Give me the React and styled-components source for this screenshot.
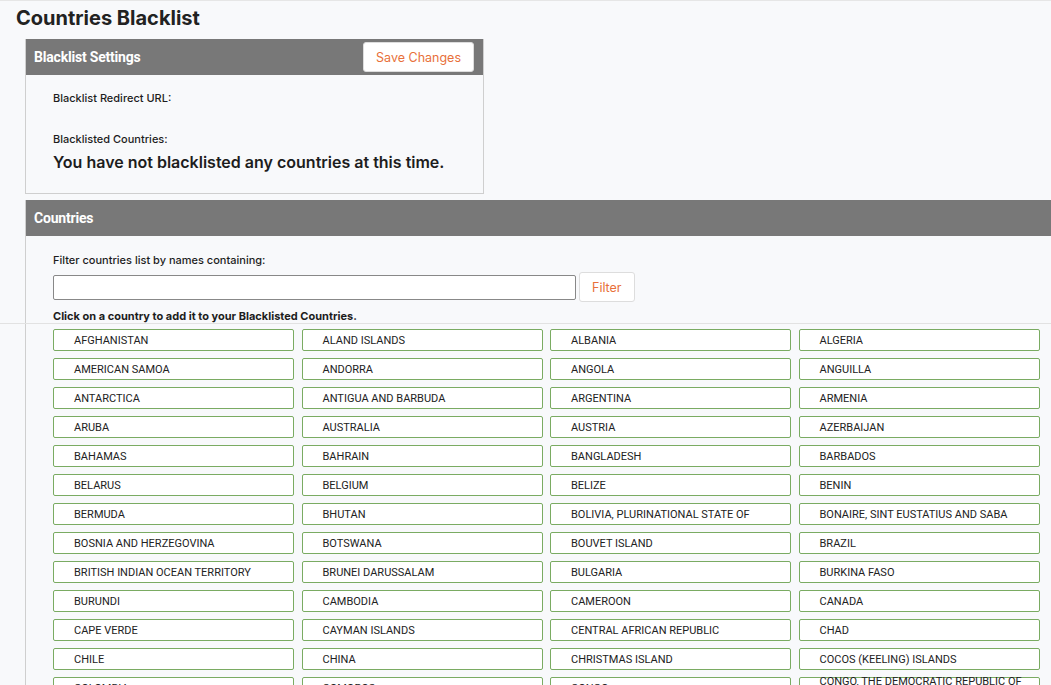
import React from "react";
import styled, { createGlobalStyle } from "styled-components";

const G = createGlobalStyle`
  html,body{margin:0;padding:0;background:#f8f9fb;font-family:Inter,Roboto,"Noto Sans",sans-serif;color:#1d1d1d;}
`;
const Page = styled.div`
  position:relative;padding:4px 0 0 16px;border-top:1px solid #e6e6e6;height:680px;overflow:hidden;
`;
const Title = styled.h1`margin:0 0 8px 0;font-size:20px;font-weight:700;line-height:26px;color:#222;`;
const Panel = styled.div`
  margin-left:9px;width:${p=>p.$w};border:1px solid #cfcfcf;border-top:none;background:#f8f9fb;margin-bottom:6px;
`;
const Head = styled.div`
  background:#787878;height:36px;display:flex;align-items:center;justify-content:space-between;padding:0 9px 0 8px;
  color:#fff;font-family:Roboto,sans-serif;font-weight:700;font-size:14px;letter-spacing:-0.2px;
`;
const Btn = styled.button`
  background:#fff;border:1px solid #ddd;border-radius:3px;color:#e8703a;font-family:Inter,Roboto,sans-serif;
  font-size:12.5px;height:30px;padding:0 12px;
`;
const Body = styled.div`padding:${p=>p.$p};`;
const Label = styled.div`font-size:11px;font-weight:${p=>p.$bold?700:500};margin-bottom:${p=>p.$mb||"0"};margin-top:${p=>p.$mt||"0"};`;
const Big = styled.div`font-size:16px;font-weight:600;margin-top:6px;`;
const FilterRow = styled.div`display:flex;gap:3px;align-items:center;margin-top:5px;`;
const Input = styled.input`width:523px;height:25px;box-sizing:border-box;border:1px solid #888;border-radius:2px;background:#fff;`;
const Grid = styled.div`display:grid;grid-template-columns:repeat(4,241px);column-gap:7.5px;row-gap:7px;margin-top:6px;`;
const Country = styled.div`
  height:22px;box-sizing:border-box;border:1px solid #7aab62;border-radius:2px;background:#fff;
  font-family:Roboto,sans-serif;font-size:11px;display:flex;align-items:center;padding-left:20px;color:#222;
`;
const Line = styled.div`position:absolute;left:0;right:0;top:322px;border-top:1px solid #e2e2e2;`;

const list = ["AFGHANISTAN","ALAND ISLANDS","ALBANIA","ALGERIA","AMERICAN SAMOA","ANDORRA","ANGOLA","ANGUILLA","ANTARCTICA","ANTIGUA AND BARBUDA","ARGENTINA","ARMENIA","ARUBA","AUSTRALIA","AUSTRIA","AZERBAIJAN","BAHAMAS","BAHRAIN","BANGLADESH","BARBADOS","BELARUS","BELGIUM","BELIZE","BENIN","BERMUDA","BHUTAN","BOLIVIA, PLURINATIONAL STATE OF","BONAIRE, SINT EUSTATIUS AND SABA","BOSNIA AND HERZEGOVINA","BOTSWANA","BOUVET ISLAND","BRAZIL","BRITISH INDIAN OCEAN TERRITORY","BRUNEI DARUSSALAM","BULGARIA","BURKINA FASO","BURUNDI","CAMBODIA","CAMEROON","CANADA","CAPE VERDE","CAYMAN ISLANDS","CENTRAL AFRICAN REPUBLIC","CHAD","CHILE","CHINA","CHRISTMAS ISLAND","COCOS (KEELING) ISLANDS","COLOMBIA","COMOROS","CONGO","CONGO, THE DEMOCRATIC REPUBLIC OF THE"];

export default function App(){
  return <Page><G/>
    <Title>Countries Blacklist</Title>
    <Panel $w="457px">
      <Head>Blacklist Settings<Btn>Save Changes</Btn></Head>
      <Body $p="16px 27px 21px">
        <Label $mb="27px">Blacklist Redirect URL:</Label>
        <Label>Blacklisted Countries:</Label>
        <Big>You have not blacklisted any countries at this time.</Big>
      </Body>
    </Panel>
    <Panel $w="1040px">
      <Head>Countries</Head>
      <Body $p="17px 27px 0">
        <Label>Filter countries list by names containing:</Label>
        <FilterRow><Input/><Btn>Filter</Btn></FilterRow>
        <Label $bold $mt="7px">Click on a country to add it to your Blacklisted Countries.</Label>
        <Grid>{list.map(c=><Country key={c}>{c}</Country>)}</Grid>
      </Body>
    </Panel>
    <Line/>
  </Page>;
}
